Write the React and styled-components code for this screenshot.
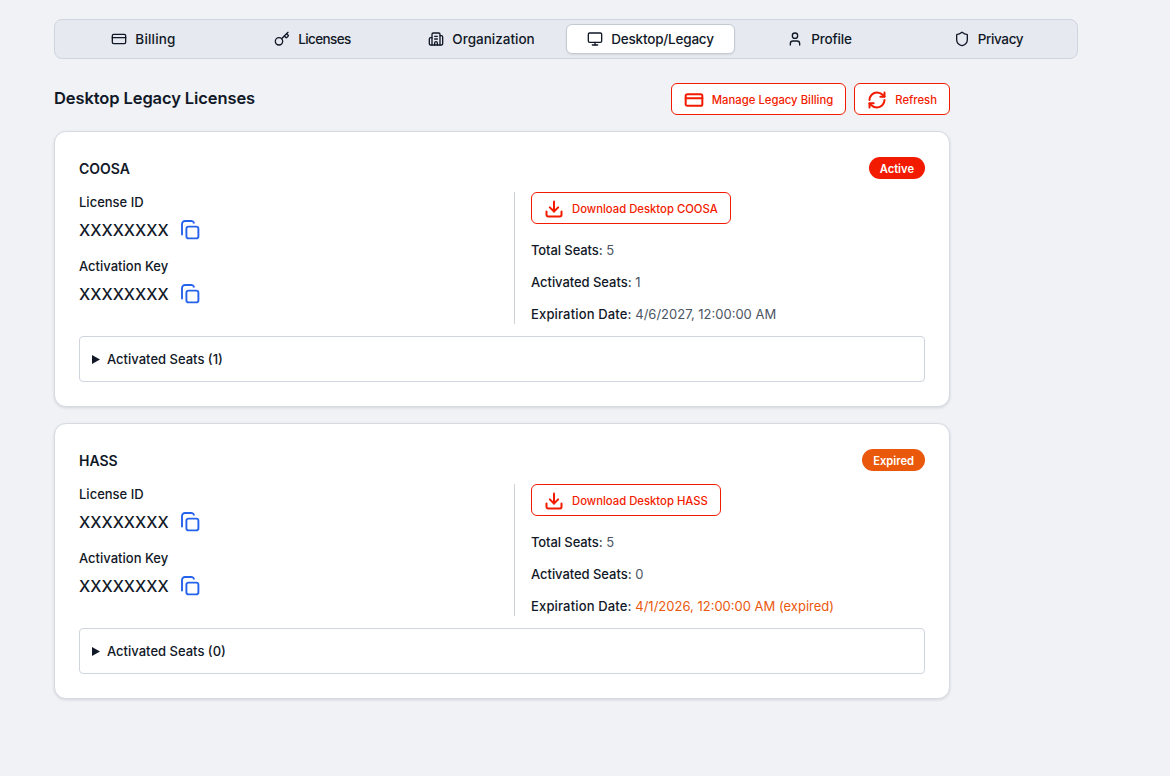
import React from "react";
import styled, { createGlobalStyle } from "styled-components";
import { CreditCard, Key, Building2, Monitor, User, Shield, RefreshCw, Download } from "lucide-react";

const Global = createGlobalStyle`
  * { box-sizing: border-box; }
  html, body { margin: 0; padding: 0; }
  body {
    background: #f0f2f6;
    color: #111827;
    font-family: Inter, "Noto Sans", sans-serif;
    min-height: 776px;
  }
`;

const Page = styled.div`
  padding: 19px 0 0 54px;
  width: 1078px;
`;
const TabBar = styled.nav`
  display: grid;
  grid-template-columns: repeat(6, 1fr);
  height: 40px;
  padding: 4px;
  background: #e6e9ef;
  border: 1px solid #cfd5df;
  border-radius: 8px;
`;
const Tab = styled.div`
  display: flex;
  align-items: center;
  justify-content: center;
  gap: 8px;
  font-size: 13.5px;
  font-weight: 500;
  letter-spacing: ${(p) => p.$track}px;
  color: #111827;
  border-radius: 6px;
  ${(p) => p.$active && `
    background: #ffffff;
    border: 1px solid #c4cad4;
    box-shadow: 0 1px 2px rgba(0,0,0,.08);
  `}
`;
const Content = styled.main`
  width: 896px;
  margin-top: 24px;
  display: flex;
  flex-direction: column;
  gap: 16px;
`;
const Header = styled.header`
  display: flex;
  align-items: center;
  justify-content: space-between;
  height: 32px;
`;
const Title = styled.h1`
  margin: 0 0 2px;
  font-size: 16.5px;
  font-weight: 600;
  letter-spacing: -0.1px;
  line-height: 28px;
`;
const Actions = styled.div`
  display: flex;
  gap: 8px;
`;
const OutlineButton = styled.button`
  display: inline-flex;
  align-items: center;
  gap: 8px;
  height: 32px;
  padding: 1px 12px 0;
  background: #ffffff;
  border: 1px solid #f21b00;
  border-radius: 6px;
  color: #f21b00;
  font-family: inherit;
  font-size: 11.3px;
  font-weight: 500;
`;
const Card = styled.section`
  background: #ffffff;
  border: 1px solid #d5dae3;
  border-radius: 12px;
  padding: 24px;
  box-shadow: 0 1px 3px rgba(0,0,0,.12);
`;
const CardHead = styled.div`
  display: flex;
  align-items: center;
  justify-content: space-between;
  height: 24px;
`;
const CardName = styled.h2`
  margin: 0;
  font-size: 14px;
  font-weight: 600;
`;
const Badge = styled.span`
  display: inline-flex;
  align-items: center;
  height: 22px;
  padding: 1px 11px 0;
  border-radius: 11px;
  background: ${(p) => p.$color};
  color: #ffffff;
  font-size: 11.2px;
  font-weight: 600;
`;
const Columns = styled.div`
  display: grid;
  grid-template-columns: 435px 1fr;
  margin-top: 12px;
  height: 132px;
`;
const LeftCol = styled.div`
  display: flex;
  flex-direction: column;
  gap: 8px;
`;
const Field = styled.div`
  display: flex;
  flex-direction: column;
  height: 56px;
`;
const FieldLabel = styled.div`
  font-size: 13px;
  font-weight: 500;
  line-height: 20px;
`;
const ValueRow = styled.div`
  display: flex;
  align-items: center;
  gap: 11px;
  height: 36px;
  font-size: 16px;
  font-weight: 500;
`;
const CopyIcon = styled.svg`
  width: 20px;
  height: 20px;
  fill: none;
  stroke: #2563eb;
  stroke-width: 1.9;
  stroke-linecap: round;
`;
const RightCol = styled.div`
  display: flex;
  flex-direction: column;
  align-items: flex-start;
  border-left: 1px solid #ccd1da;
  padding-left: 16px;
`;
const Stat = styled.div`
  margin-top: 12px;
  font-size: 13px;
  line-height: 20px;
  color: #111827;
`;
const StatLabel = styled.span`
  font-weight: 500;
  letter-spacing: ${(p) => p.$track}px;
`;
const StatList = styled.div`
  margin-top: 4px;
`;
const StatValue = styled.span`
  font-weight: 400;
  color: ${(p) => p.$color || "#4b5563"};
`;
const Disclosure = styled.div`
  display: flex;
  align-items: center;
  gap: 7px;
  height: 46px;
  margin-top: 12px;
  padding-left: 12px;
  border: 1px solid #cfd4de;
  border-radius: 4px;
  font-size: 13px;
  font-weight: 500;
`;
const Caret = styled.svg`
  width: 8px;
  height: 9px;
  fill: #111827;
`;

const tabs = [
  ["Billing", CreditCard, 0.2],
  ["Licenses", Key, -0.6],
  ["Organization", Building2, 0],
  ["Desktop/Legacy", Monitor, -0.2],
  ["Profile", User, -0.2],
  ["Privacy", Shield, -0.4],
];

const licenses = [
  { name: "COOSA", status: "Active", color: "#f21b00", seats: 1, date: "4/6/2027, 12:00:00 AM" },
  { name: "HASS", status: "Expired", color: "#ea580c", seats: 0, date: "4/1/2026, 12:00:00 AM (expired)", dateColor: "#ea580c" },
];

function KeyField({ label }) {
  return (
    <Field>
      <FieldLabel>{label}</FieldLabel>
      <ValueRow>
        XXXXXXXX
        <CopyIcon viewBox="0 0 20 20">
          <rect x="6.4" y="6.6" width="12" height="11.8" rx="2.2" />
          <path d="M2 14.5V4a3 3 0 0 1 3-3h6.5a2.6 2.6 0 0 1 2.4 1.8" />
        </CopyIcon>
      </ValueRow>
    </Field>
  );
}

function LicenseCard({ l }) {
  return (
    <Card>
      <CardHead>
        <CardName>{l.name}</CardName>
        <Badge $color={l.color}>{l.status}</Badge>
      </CardHead>
      <Columns>
        <LeftCol>
          <KeyField label="License ID" />
          <KeyField label="Activation Key" />
        </LeftCol>
        <RightCol>
          <OutlineButton>
            <Download size={20} strokeWidth={2.4} />
            Download Desktop {l.name}
          </OutlineButton>
          <StatList>
            <Stat><StatLabel $track={-0.1}>Total Seats:</StatLabel> <StatValue>5</StatValue></Stat>
            <Stat><StatLabel $track={-0.05}>Activated Seats:</StatLabel> <StatValue>{l.seats}</StatValue></Stat>
            <Stat><StatLabel $track={0.15}>Expiration Date:</StatLabel> <StatValue $color={l.dateColor}>{l.date}</StatValue></Stat>
          </StatList>
        </RightCol>
      </Columns>
      <Disclosure>
        <Caret viewBox="0 0 8 9"><path d="M0 0l8 4.5L0 9z" /></Caret>
        Activated Seats ({l.seats})
      </Disclosure>
    </Card>
  );
}

export default function App() {
  return (
    <Page>
      <Global />
      <TabBar>
        {tabs.map(([label, Icon, track]) => (
          <Tab key={label} $active={label === "Desktop/Legacy"} $track={track}>
            <Icon size={16} strokeWidth={2} />
            {label}
          </Tab>
        ))}
      </TabBar>
      <Content>
        <Header>
          <Title>Desktop Legacy Licenses</Title>
          <Actions>
            <OutlineButton><CreditCard size={20} strokeWidth={2.4} />Manage Legacy Billing</OutlineButton>
            <OutlineButton><RefreshCw size={20} strokeWidth={2.4} />Refresh</OutlineButton>
          </Actions>
        </Header>
        {licenses.map((l) => <LicenseCard key={l.name} l={l} />)}
      </Content>
    </Page>
  );
}
